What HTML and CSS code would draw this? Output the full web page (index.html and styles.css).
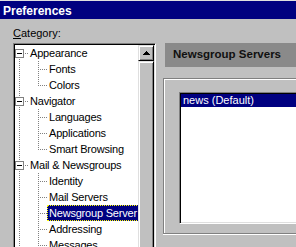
FILE: index.html
```html
<!DOCTYPE html>
<html lang="en">
<head>
  <meta charset="UTF-8" />
  <title>Preferences</title>
  <link rel="stylesheet" href="styles.css">
</head>
<body>
  <div class="titlebar">Preferences</div>
  <div class="caption"><u>C</u>ategory:</div>

  <div class="main">
    <div class="tree-box">
      <div class="tree">
        <div class="row">
          <div class="toggle first"><div class="box"></div></div>
          <span class="label">Appearance</span>
        </div>
        <div class="row">
          <div class="stem"></div><div class="branch"></div>
          <span class="label">Fonts</span>
        </div>
        <div class="row">
          <div class="stem"></div><div class="branch last"></div>
          <span class="label">Colors</span>
        </div>
        <div class="row">
          <div class="toggle"><div class="box"></div></div>
          <span class="label">Navigator</span>
        </div>
        <div class="row">
          <div class="stem"></div><div class="branch"></div>
          <span class="label">Languages</span>
        </div>
        <div class="row">
          <div class="stem"></div><div class="branch"></div>
          <span class="label">Applications</span>
        </div>
        <div class="row">
          <div class="stem"></div><div class="branch last"></div>
          <span class="label">Smart Browsing</span>
        </div>
        <div class="row">
          <div class="toggle"><div class="box"></div></div>
          <span class="label">Mail &amp; Newsgroups</span>
        </div>
        <div class="row">
          <div class="stem"></div><div class="branch"></div>
          <span class="label">Identity</span>
        </div>
        <div class="row">
          <div class="stem"></div><div class="branch"></div>
          <span class="label">Mail Servers</span>
        </div>
        <div class="row">
          <div class="stem"></div><div class="branch"></div>
          <span class="label selected">Newsgroup Server</span>
        </div>
        <div class="row">
          <div class="stem"></div><div class="branch"></div>
          <span class="label">Addressing</span>
        </div>
        <div class="row">
          <div class="stem"></div><div class="branch"></div>
          <span class="label">Messages</span>
        </div>
      </div>
      <div class="scroll">
        <div class="scroll-btn">
          <svg width="7" height="4" viewBox="0 0 7 4">
            <rect x="3" y="0" width="1" height="1"/>
            <rect x="2" y="1" width="3" height="1"/>
            <rect x="1" y="2" width="5" height="1"/>
            <rect x="0" y="3" width="7" height="1"/>
          </svg>
        </div>
        <div class="thumb"></div>
      </div>
    </div>

    <div class="panel">
      <div class="panel-head">Newsgroup Servers</div>
      <div class="frame">
        <div class="list">
          <div class="list-item selected">news (Default)</div>
        </div>
      </div>
    </div>
  </div>
</body>
</html>
```

FILE: styles.css
```css
body {
  margin: 0;
  padding: 0;
  width: 296px;
  height: 247px;
  overflow: hidden;
  background: #c0c0c0;
  border-top: 1px solid #dfdfdf;
  font-family: "Liberation Sans", Arial, sans-serif;
  font-size: 11px;
  color: #000;
}
.titlebar {
  height: 15px;
  padding: 3px 0 0 3px;
  line-height: 15px;
  background: #000080;
  color: #fff;
  font-weight: bold;
  font-size: 12px;
}
.caption {
  margin: 8px 0 0 13px;
  line-height: 13px;
}
.main {
  display: flex;
  gap: 7px;
  margin-top: 3px;
  padding-left: 13px;
}

/* sunken list with scrollbar */
.tree-box {
  flex-shrink: 0;
  width: 143px;
  height: 204px;
  box-sizing: border-box;
  display: flex;
  border: 1px solid;
  border-color: #808080 #fff #fff #808080;
  box-shadow: inset 1px 1px #000, inset -1px -1px #dfdfdf;
  padding: 1px 1px 0;
  border-bottom: 0;
}
.tree {
  width: 123px;
  background: #fff;
  overflow: hidden;
}
.row {
  display: flex;
  height: 16px;
  line-height: 16px;
}
.stem {
  flex-shrink: 0;
  width: 19px;
  background: repeating-linear-gradient(#808080 0 1px, transparent 1px 2px) 4px 0 / 1px 100% no-repeat;
}
.branch {
  flex-shrink: 0;
  width: 13px;
  background:
    repeating-linear-gradient(#808080 0 1px, transparent 1px 2px) 4px 0 / 1px 100% no-repeat,
    repeating-linear-gradient(to right, #808080 0 1px, transparent 1px 2px) 6px 8px / 7px 1px no-repeat;
}
.branch.last {
  background:
    repeating-linear-gradient(#808080 0 1px, transparent 1px 2px) 4px 0 / 1px 9px no-repeat,
    repeating-linear-gradient(to right, #808080 0 1px, transparent 1px 2px) 6px 8px / 7px 1px no-repeat;
}
.toggle {
  flex-shrink: 0;
  width: 13px;
  background:
    repeating-linear-gradient(#808080 0 1px, transparent 1px 2px) 4px 0 / 1px 100% no-repeat,
    repeating-linear-gradient(to right, #808080 0 1px, transparent 1px 2px) 10px 8px / 3px 1px no-repeat;
}
.toggle.first {
  background:
    repeating-linear-gradient(#808080 0 1px, transparent 1px 2px) 4px 12px / 1px 4px no-repeat,
    repeating-linear-gradient(to right, #808080 0 1px, transparent 1px 2px) 10px 8px / 3px 1px no-repeat;
}
.box {
  width: 7px;
  height: 7px;
  margin-top: 4px;
  border: 1px solid #808080;
  background: #fff;
}
.box::after {
  content: "";
  display: block;
  width: 5px;
  height: 1px;
  margin: 3px 1px;
  background: #000;
}
.label {
  padding: 0 2px;
  white-space: nowrap;
  letter-spacing: -0.2px;
}
.label.selected {
  background: #000080;
  color: #fff;
  outline: 1px dotted #ffff00;
  outline-offset: -1px;
}

.scroll {
  width: 16px;
  display: flex;
  flex-direction: column;
}
.scroll-btn,
.thumb {
  box-sizing: border-box;
  border: 1px solid;
  border-color: #dfdfdf #000 #000 #dfdfdf;
  box-shadow: inset 1px 1px #fff, inset -1px -1px #808080;
  background: #c0c0c0;
}
.scroll-btn {
  height: 16px;
  display: flex;
  align-items: center;
  justify-content: center;
}
.thumb {
  flex: 1;
  border-bottom: 0;
  box-shadow: inset 1px 1px #fff, inset -1px 0 #808080;
}

/* right side */
.panel {
  flex-shrink: 0;
  width: 133px;
}
.panel-head {
  height: 24px;
  box-sizing: border-box;
  margin-left: 2px;
  padding: 0 0 1px 8px;
  line-height: 23px;
  background: #8a8a8a;
  color: #101010;
  font-weight: bold;
  font-size: 11.5px;
  white-space: nowrap;
}
.frame {
  margin-top: 11px;
  height: 156px;
  box-sizing: border-box;
  border: 1px solid #808080;
  border-right: 0;
  box-shadow: inset 1px 1px #fff, 0 1px #fff;
  padding: 13px 0 0 15px;
}
.list {
  height: 132px;
  box-sizing: border-box;
  border: 1px solid;
  border-color: #808080 #fff #fff #808080;
  border-right: 0;
  box-shadow: inset 1px 1px #000, inset 0 -1px #dfdfdf;
  padding: 1px 0 1px 1px;
  background: #fff;
}
.list-item {
  height: 13px;
  line-height: 13px;
  padding-left: 2px;
  white-space: nowrap;
}
.list-item.selected {
  background: #000080;
  color: #fff;
}
```
